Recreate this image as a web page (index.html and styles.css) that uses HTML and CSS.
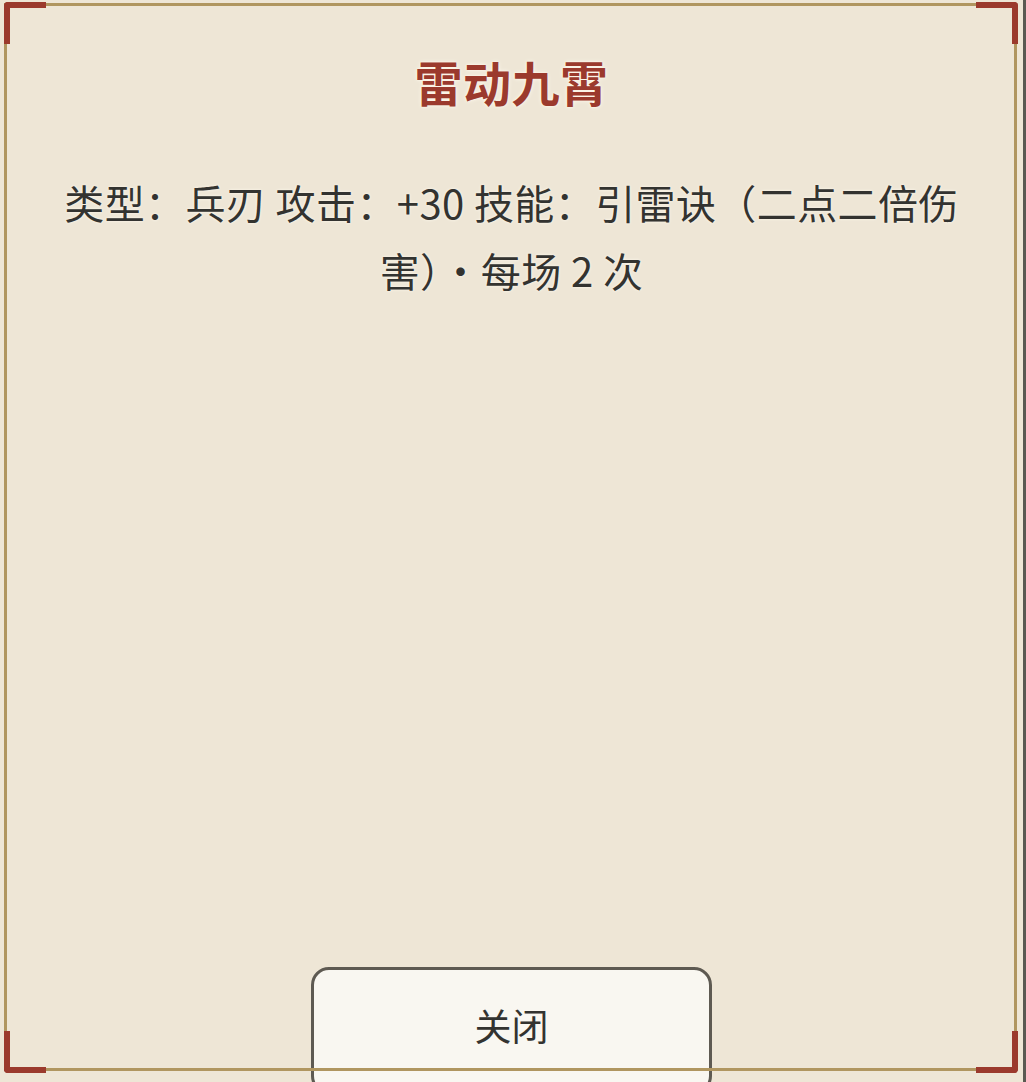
FILE: index.html
```html
<!DOCTYPE html>
<html>
<head>
    <title>雷动九霄</title>
    <link rel="stylesheet" href="styles.css">
</head>
<body>
    <div class="panel">
        <h1 class="title">雷动九霄</h1>
        <p class="desc">类型：兵刃 攻击：+30 技能：引雷诀（二点二倍伤害）·每场 2 次</p>
        <button class="close-btn" type="button">关闭</button>
        <div class="frame">
            <span class="corner tl"></span>
            <span class="corner tr"></span>
            <span class="corner bl"></span>
            <span class="corner br"></span>
        </div>
    </div>
</body>
</html>
```

FILE: styles.css
```css
:root {
    --bg-color: #eee6d6;
    --gold: #b09660;
    --red: #9b3a2d;
    --text-color: #333330;
    --edge: #5a5952;
}

body {
    margin: 0;
    overflow: hidden;
    background-color: var(--bg-color);
    font-family: "Noto Sans CJK SC", "Noto Sans", sans-serif;
}

.panel {
    position: relative;
    box-sizing: border-box;
    height: 1082px;
    padding: 0 56px;
    display: flex;
    flex-direction: column;
    align-items: center;
    border-right: 3px solid var(--edge);
}

.title {
    margin: 47px 0 0 0;
    font-size: 48px;
    line-height: 68px;
    font-weight: 700;
    letter-spacing: 0.5px;
    color: var(--red);
    text-shadow: 0 0 4px #fff8ec, 0 0 2px #fff8ec;
}

.desc {
    margin: 53px 0 0 0;
    font-size: 40px;
    line-height: 68px;
    letter-spacing: 0.4px;
    text-align: center;
    color: var(--text-color);
    text-shadow: 0 0 3px #fffaf0;
}

.close-btn {
    margin-top: auto;
    margin-bottom: -12px;
    width: 401px;
    height: 127px;
    flex-shrink: 0;
    padding-bottom: 12px;
    background-color: #f9f7f1;
    border: 3px solid #5e5a52;
    border-radius: 18px;
    font-family: "Noto Sans CJK SC", sans-serif;
    font-size: 37px;
    color: var(--text-color);
}

/* decorative frame drawn over the panel */
.frame {
    position: absolute;
    top: 3px;
    left: 4px;
    right: 6px;
    bottom: 11px;
    border: 3px solid var(--gold);
    pointer-events: none;
}

.corner {
    position: absolute;
    width: 36px;
    height: 36px;
    border-color: var(--red);
    border-style: solid;
    border-width: 0;
}

.corner.tl {
    top: -4px;
    left: -3px;
    border-top-width: 6px;
    border-left-width: 6px;
    border-top-left-radius: 4px;
}

.corner.tr {
    top: -4px;
    right: -4px;
    border-top-width: 6px;
    border-right-width: 6px;
    border-top-right-radius: 4px;
}

.corner.bl {
    bottom: -5px;
    left: -3px;
    border-bottom-width: 6px;
    border-left-width: 6px;
    border-bottom-left-radius: 4px;
}

.corner.br {
    bottom: -5px;
    right: -4px;
    border-bottom-width: 6px;
    border-right-width: 6px;
    border-bottom-right-radius: 4px;
}
```
